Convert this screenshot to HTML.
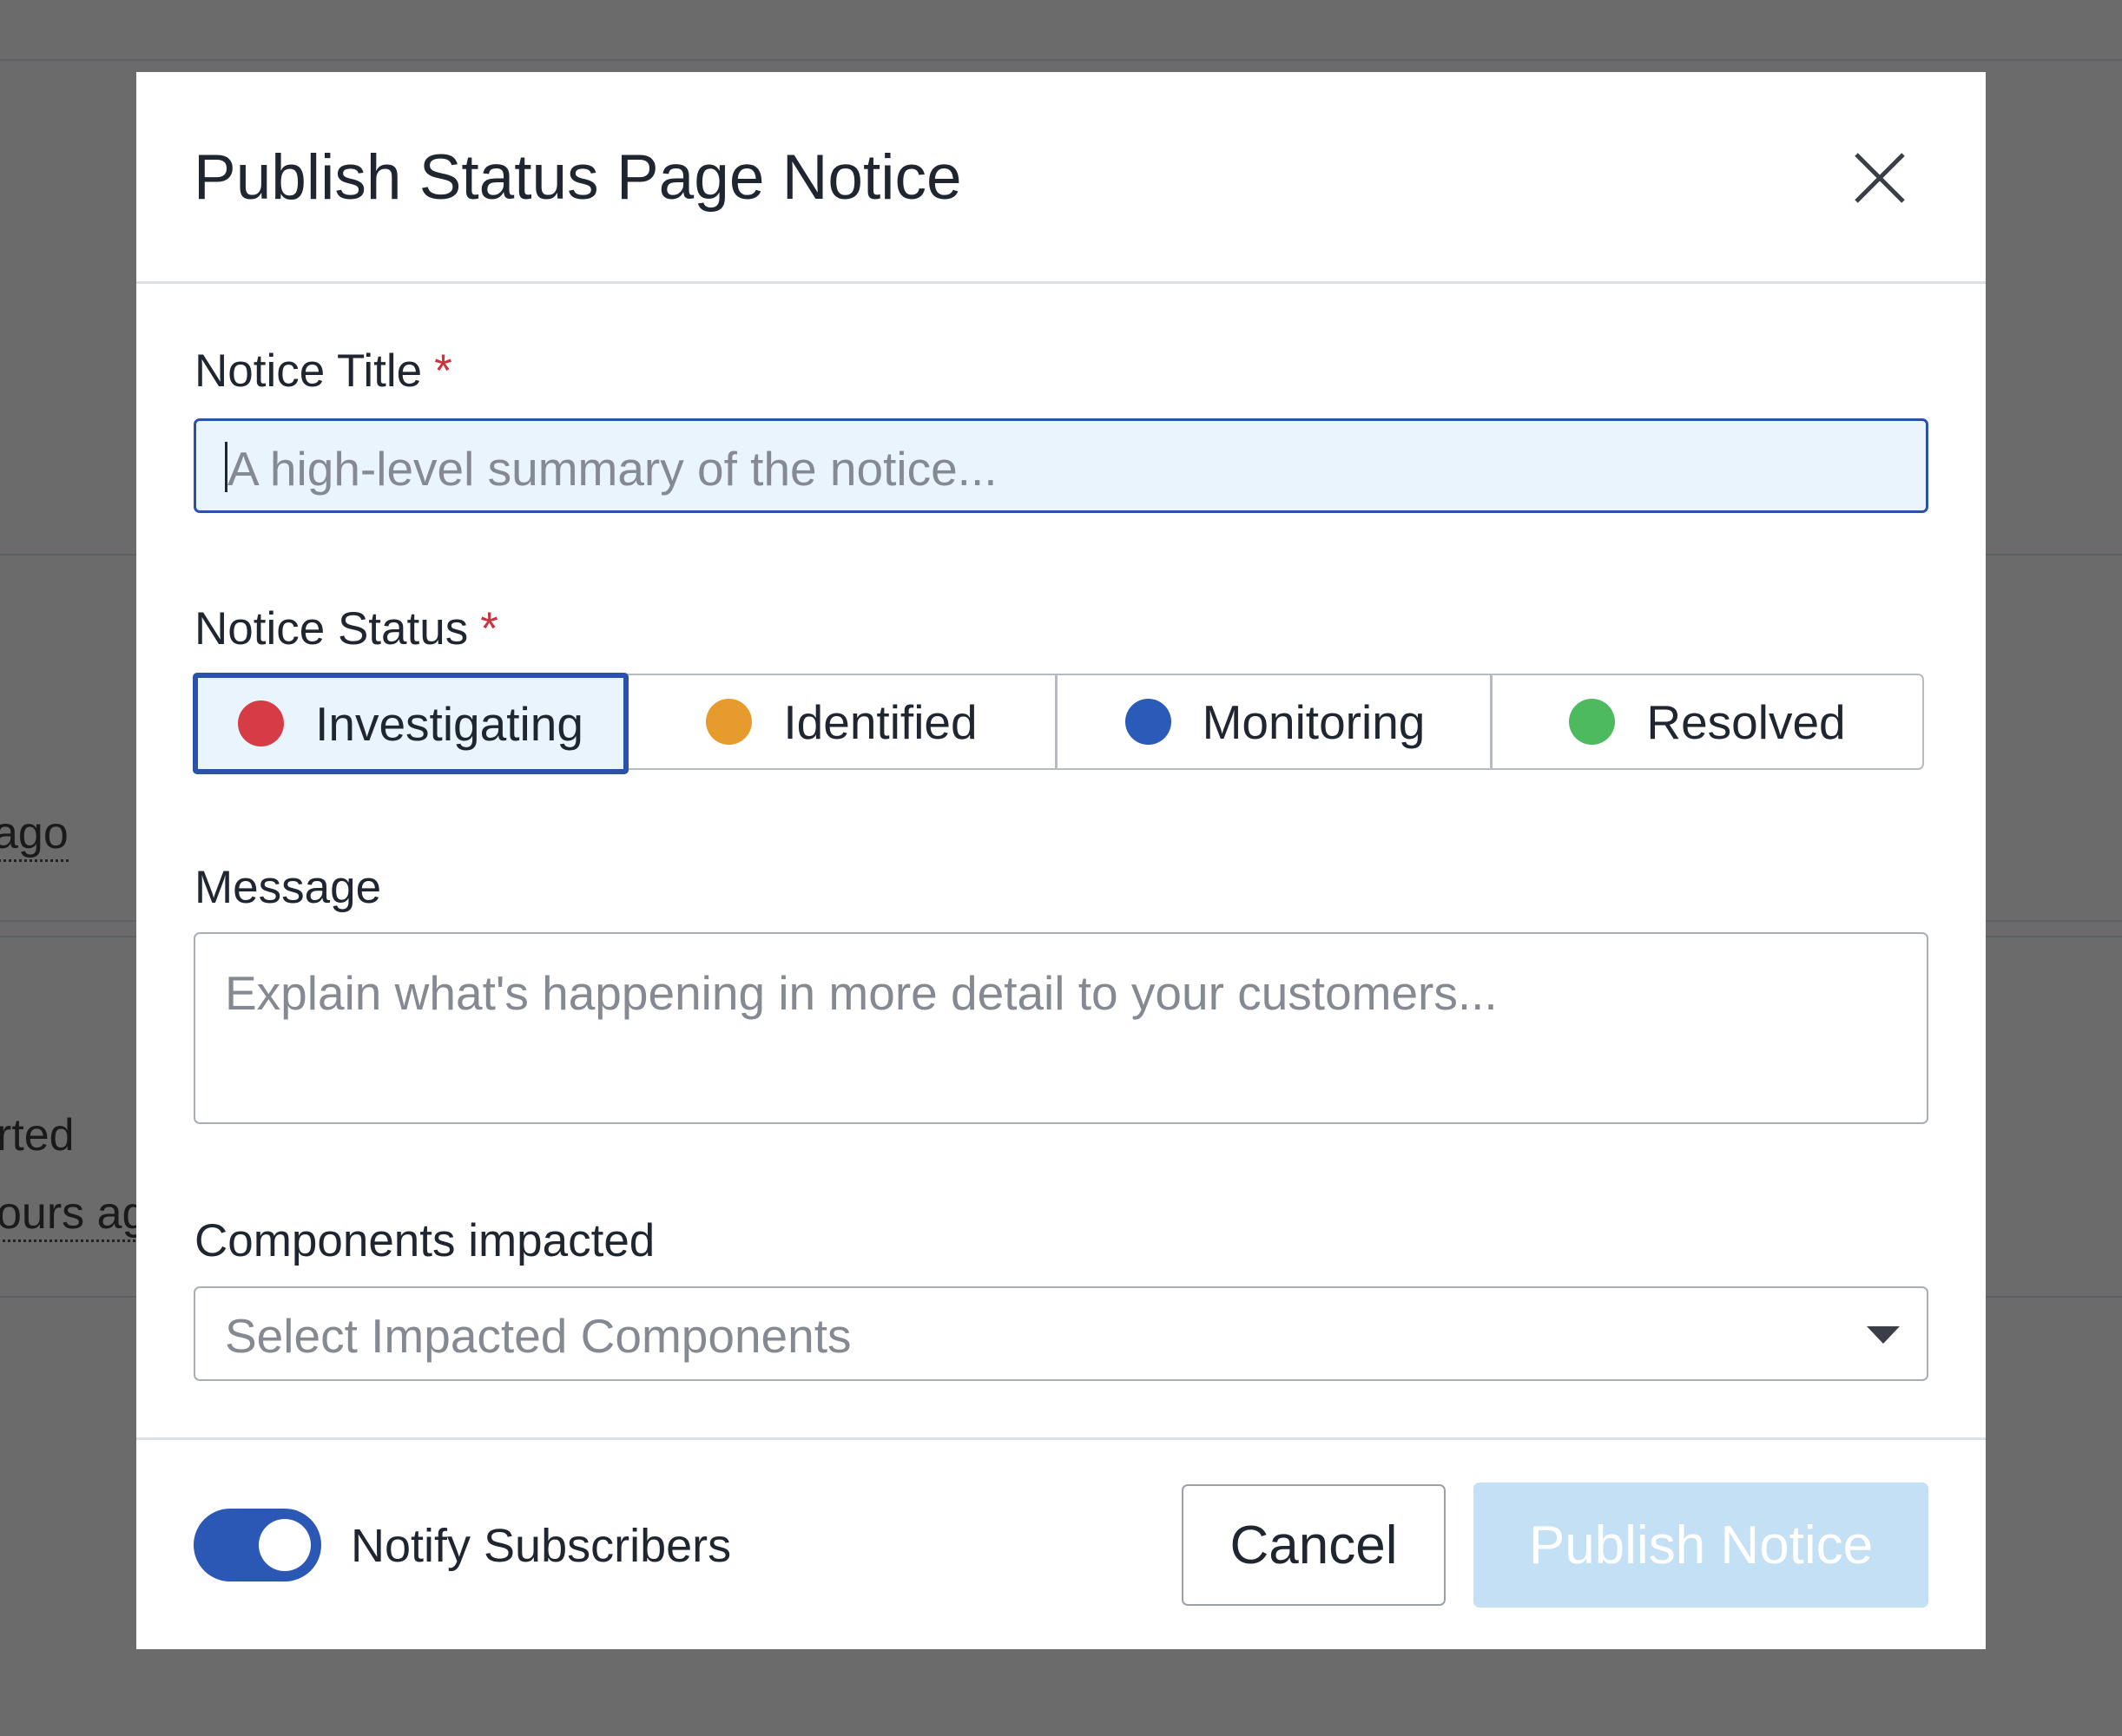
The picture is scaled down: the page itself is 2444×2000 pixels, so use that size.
<!DOCTYPE html>
<html><head><meta charset="utf-8"><style>
*{box-sizing:border-box;margin:0;padding:0}
body{width:2444px;height:2000px;background:#6b6b6b;position:relative;overflow:hidden;font-family:"Liberation Sans",sans-serif;color:#1f2630}
.a{position:absolute}
.line{position:absolute;height:2px;background:#5c5f66}
.bgt{position:absolute;color:#1a1a1a;font-size:52px}
.modal{position:absolute;left:157px;top:83px;width:2130px;height:1817px;background:#fff}
.lbl{position:absolute;left:67px;font-size:53px;color:#1f2630}
.req{color:#c9353f;margin-left:14px}
.box{position:absolute;left:66px;width:1998px;border:2px solid #a9adb5;border-radius:7px;background:#fff}
.ph{position:absolute;left:34px;font-size:55px;color:#858a92}
.seg{position:absolute;top:0;height:111px;display:flex;align-items:center;justify-content:center;font-size:55px;color:#1f2630}
.dot{width:53px;height:53px;border-radius:50%;margin-right:36px}
</style></head><body>
<div class="line" style="left:0;top:68px;width:2444px"></div>
<div class="line" style="left:0;top:638px;width:2444px"></div>
<div class="line" style="left:0;top:1060px;width:2444px"></div>
<div class="line" style="left:0;top:1078px;width:2444px"></div>
<div class="line" style="left:0;top:1493px;width:2444px"></div>
<div class="bgt" style="left:-8px;top:930px;border-bottom:3px dotted #222">ago</div>
<div class="bgt" style="left:-4px;top:1278px">rted</div>
<div class="bgt" style="left:-4px;top:1368px;border-bottom:3px dotted #222">ours ag</div>

<div class="modal">
  <div class="a" style="left:66px;top:80px;font-size:73px;color:#1f2630">Publish Status Page Notice</div>
  <svg class="a" style="left:1978px;top:92px" width="60" height="60" viewBox="0 0 60 60"><path d="M3 3L57 57M57 3L3 57" stroke="#3a3f47" stroke-width="5"/></svg>
  <div class="a" style="left:0;top:241px;width:2130px;height:3px;background:#dde0e5"></div>

  <div class="lbl" style="top:314px">Notice Title<span class="req">*</span></div>
  <div class="box" style="top:399px;height:109px;background:#eaf4fc;border:3px solid #2a52a8">
    <div class="a" style="left:33px;top:24px;width:3px;height:58px;background:#1f2630"></div>
    <div class="ph" style="top:23px;left:36px">A high-level summary of the notice...</div>
  </div>

  <div class="lbl" style="top:611px">Notice Status<span class="req">*</span></div>
  <div class="box" style="top:693px;height:111px;width:1993px;border-color:#b6bac2">
    <div class="seg" style="left:-3px;top:-3px;width:502px;height:117px;background:#eaf4fc;border:6px solid #2a52a8;border-radius:5px"><div class="dot" style="background:#d63c45"></div>Investigating</div>
    <div class="seg" style="left:499px;width:494px;border-right:3px solid #b6bac2;top:0;height:107px"><div class="dot" style="background:#e89b2d"></div>Identified</div>
    <div class="seg" style="left:996px;width:498px;border-right:3px solid #b6bac2;top:0;height:107px"><div class="dot" style="background:#2b5bb8"></div>Monitoring</div>
    <div class="seg" style="left:1494px;width:495px;top:0;height:107px"><div class="dot" style="background:#4dba5f"></div>Resolved</div>
  </div>

  <div class="lbl" style="top:909px">Message</div>
  <div class="box" style="top:991px;height:221px">
    <div class="ph" style="top:36px">Explain what's happening in more detail to your customers...</div>
  </div>

  <div class="lbl" style="top:1316px">Components impacted</div>
  <div class="box" style="top:1399px;height:109px">
    <div class="ph" style="top:23px">Select Impacted Components</div>
    <svg class="a" style="left:1925px;top:44px" width="38" height="22"><path d="M0 0H38L19 20Z" fill="#3a3f47"/></svg>
  </div>

  <div class="a" style="left:0;top:1573px;width:2130px;height:3px;background:#dde0e5"></div>

  <div class="a" style="left:66px;top:1655px;width:147px;height:84px;border-radius:42px;background:#2a58b4">
    <div class="a" style="left:75px;top:12px;width:60px;height:60px;border-radius:50%;background:#fff"></div>
  </div>
  <div class="a" style="left:247px;top:1667px;font-size:54px">Notify Subscribers</div>

  <div class="a" style="left:1204px;top:1627px;width:304px;height:140px;border:2px solid #9ca1a9;border-radius:7px;font-size:62px;display:flex;align-items:center;justify-content:center;color:#1f2630">Cancel</div>
  <div class="a" style="left:1540px;top:1625px;width:524px;height:144px;background:#c4e0f5;border-radius:7px;font-size:62px;display:flex;align-items:center;justify-content:center;color:#fff">Publish Notice</div>
</div>
</body></html>
